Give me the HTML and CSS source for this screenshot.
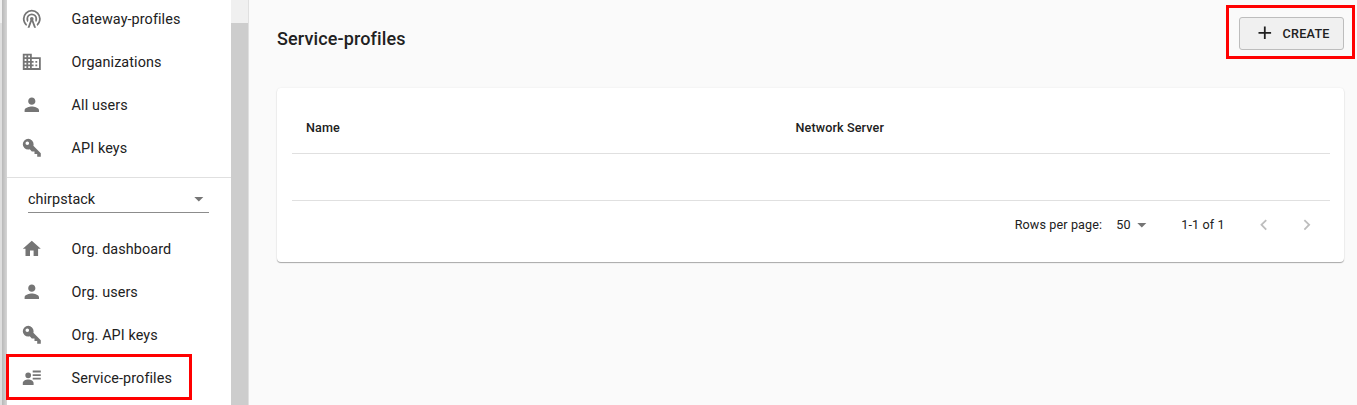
FILE: index.html
```html
<!DOCTYPE html>
<html lang="en">
<head>
<meta charset="utf-8">
<title>Service-profiles</title>
<link rel="stylesheet" href="styles.css">
</head>
<body>
<svg class="defs" aria-hidden="true">
<symbol id="tower" viewBox="0 0 24 24"><path d="M12,10A2,2 0 0,1 14,12C14,12.5 13.82,12.94 13.53,13.29L16.7,22H14.57L12,14.93L9.43,22H7.3L10.47,13.29C10.18,12.94 10,12.5 10,12A2,2 0 0,1 12,10M12,8A4,4 0 0,0 8,12C8,12.5 8.1,13 8.28,13.46L7.4,15.86C6.53,14.81 6,13.47 6,12A6,6 0 0,1 12,6A6,6 0 0,1 18,12C18,13.47 17.47,14.81 16.6,15.86L15.72,13.46C15.9,13 16,12.5 16,12A4,4 0 0,0 12,8M12,4A8,8 0 0,0 4,12C4,14.36 5,16.5 6.64,17.94L5.92,19.94C3.54,18.11 2,15.23 2,12A10,10 0 0,1 12,2A10,10 0 0,1 22,12C22,15.23 20.46,18.11 18.08,19.94L17.36,17.94C19,16.5 20,14.36 20,12A8,8 0 0,0 12,4Z"/></symbol>
<symbol id="domain" viewBox="0 0 24 24"><path d="M12 7V3H2v18h20V7H12zM6 19H4v-2h2v2zm0-4H4v-2h2v2zm0-4H4V9h2v2zm0-4H4V5h2v2zm4 12H8v-2h2v2zm0-4H8v-2h2v2zm0-4H8V9h2v2zm0-4H8V5h2v2zm10 12h-8v-2h2v-2h-2v-2h2v-2h-2V9h8v10zm-2-8h-2v2h2v-2zm0 4h-2v2h2v-2z"/></symbol>
<symbol id="user" viewBox="0 0 24 24"><path d="M12 12c2.21 0 4-1.79 4-4s-1.79-4-4-4-4 1.79-4 4 1.79 4 4 4zm0 2c-2.67 0-8 1.34-8 4v2h16v-2c0-2.66-5.33-4-8-4z"/></symbol>
<symbol id="key" viewBox="0 0 24 24"><path d="M22,18V22H18V19H15V16H12L9.74,13.74C9.19,13.91 8.61,14 8,14A6,6 0 0,1 2,8A6,6 0 0,1 8,2A6,6 0 0,1 14,8C14,8.61 13.91,9.19 13.74,9.74L22,18M7,5A2,2 0 0,0 5,7A2,2 0 0,0 7,9A2,2 0 0,0 9,7A2,2 0 0,0 7,5Z"/></symbol>
<symbol id="home" viewBox="0 0 24 24"><path d="M10 20v-6h4v6h5v-8h3L12 3 2 12h3v8z"/></symbol>
<symbol id="details" viewBox="0 0 24 24"><path d="M13 4h9v2h-9zM13 8h9v2h-9zM13 12h9v2h-9zM8 6a3 3 0 1 1 0 6.400A3 3 0 0 1 8 6zM2 20v-2c0-2.300 3-4 6-4s6 1.700 6 4v2z"/></symbol>
<symbol id="caret" viewBox="0 0 24 24"><path d="M7 10l5 5 5-5z"/></symbol>
<symbol id="plus" viewBox="0 0 24 24"><path d="M19 13h-6v6h-2v-6H5v-2h6V5h2v6h6z"/></symbol>
<symbol id="left" viewBox="0 0 24 24"><path d="M15.41 16.59L10.83 12l4.58-4.59L14 6l-6 6 6 6z"/></symbol>
<symbol id="right" viewBox="0 0 24 24"><path d="M8.59 16.59L13.17 12 8.59 7.41 10 6l6 6-6 6z"/></symbol>
</svg>
<div class="app">
<div class="edge"></div>
<nav class="sidebar">
<ul class="menu">
<li><svg class="icon"><use href="#tower"/></svg>Gateway-profiles</li>
<li><svg class="icon"><use href="#domain"/></svg>Organizations</li>
<li><svg class="icon"><use href="#user"/></svg>All users</li>
<li><svg class="icon"><use href="#key"/></svg>API keys</li>
</ul>
<div class="org"><div class="select"><span>chirpstack</span><svg class="icon"><use href="#caret"/></svg></div></div>
<ul class="menu">
<li><svg class="icon"><use href="#home"/></svg>Org. dashboard</li>
<li><svg class="icon"><use href="#user"/></svg>Org. users</li>
<li><svg class="icon"><use href="#key"/></svg>Org. API keys</li>
<li class="current"><svg class="icon"><use href="#details"/></svg>Service-profiles</li>
</ul>
</nav>
<div class="scrollbar"><div class="thumb"></div></div>
<main class="main">
<header class="head"><h1>Service-profiles</h1><button class="create"><svg class="icon"><use href="#plus"/></svg>CREATE</button></header>
<section class="card">
<div class="row thead"><span>Name</span><span>Network Server</span></div>
<div class="row blank"></div>
<div class="pager"><span class="label">Rows per page:</span><span class="size">50</span><svg class="icon caret"><use href="#caret"/></svg><span class="range">1-1 of 1</span><svg class="icon arrow"><use href="#left"/></svg><svg class="icon arrow"><use href="#right"/></svg></div>
</section>
</main>
</div>
</body>
</html>
```
FILE: styles.css
```css
*, *::after { box-sizing: border-box; }
body { margin: 0; background: #fafafa; color: #212121; font-family: Roboto, sans-serif; overflow: hidden; }
.defs { display: none; }
.app { display: flex; height: 405px; }
.edge { width: 7px; flex: none; background: linear-gradient(90deg, transparent 2px, #b8b8b8 2px, #d6d6d6 7px), linear-gradient(#f0f0f0 23px, #dedede 23px); }
.sidebar { width: 224px; flex: none; background: #fff; }
.icon { width: 21.6px; height: 21.6px; fill: #757575; flex: none; display: block; }
.menu { list-style: none; margin: 0; padding: 0; }
.menu:first-child { height: 179px; margin-top: -2px; }
.menu li { height: 43px; padding-left: 14px; display: flex; align-items: center; gap: 29px; font-size: 14.4px; letter-spacing: 0.09px; position: relative; }
.menu .icon { margin-bottom: 1px; }
.menu .current::after { content: ""; position: absolute; left: -1px; top: -3px; width: 186px; height: 46px; border: 3px solid #f00; }
.org { border-top: 1px solid #e0e0e0; height: 51px; padding: 8px 22px 0 21px; }
.select { height: 27px; border-bottom: 1px solid #8c8c8c; display: flex; align-items: center; justify-content: space-between; font-size: 14.4px; letter-spacing: 0.05px; }
.select .icon { margin-right: -1px; }
.scrollbar { width: 18px; flex: none; background: #f0f0f0; border-right: 1px solid #e0e0e0; padding-top: 23px; }
.thumb { height: 382px; background: #cdcdcd; }
.main { flex: 1; padding: 17px 13px 0 28px; }
.head { display: flex; justify-content: space-between; height: 71px; align-items: flex-start; }
h1 { margin: 0; font-size: 18px; font-weight: 500; line-height: 43px; letter-spacing: 0.12px; }
.create { position: relative; width: 105px; height: 33px; border: 1px solid #bdbdbd; border-radius: 3px; background: #f0f0f0; color: #212121; font: 500 12.6px Roboto, sans-serif; letter-spacing: 0.25px; display: flex; align-items: center; gap: 7px; padding: 0 0 0 14px; }
.create .icon { fill: #212121; margin-bottom: 1px; }
.create::after { content: ""; position: absolute; left: -14px; top: -13px; width: 129px; height: 54px; border: 3px solid #f00; }
.card { height: 174px; background: #fff; border-radius: 4px; padding: 14px 14px 0 15px; box-shadow: 0 1px 1px rgba(0,0,0,.32), 0 0 2px rgba(0,0,0,.08); }
.row { border-bottom: 1px solid #e0e0e0; }
.thead { display: grid; grid-template-columns: 489.5px 1fr; height: 52px; align-items: center; padding-left: 14px; font-size: 12.6px; font-weight: 500; letter-spacing: 0.12px; }
.blank { height: 47px; }
.pager { display: flex; align-items: center; justify-content: flex-end; height: 47px; font-size: 12.6px; letter-spacing: 0.12px; padding-right: 12px; }
.size { margin-left: 14px; }
.pager .caret { margin-right: 1px; }
.range { margin: 0 28.5px 0 28px; }
.arrow { fill: #bdbdbd; }
.arrow + .arrow { margin-left: 21.6px; }
```
